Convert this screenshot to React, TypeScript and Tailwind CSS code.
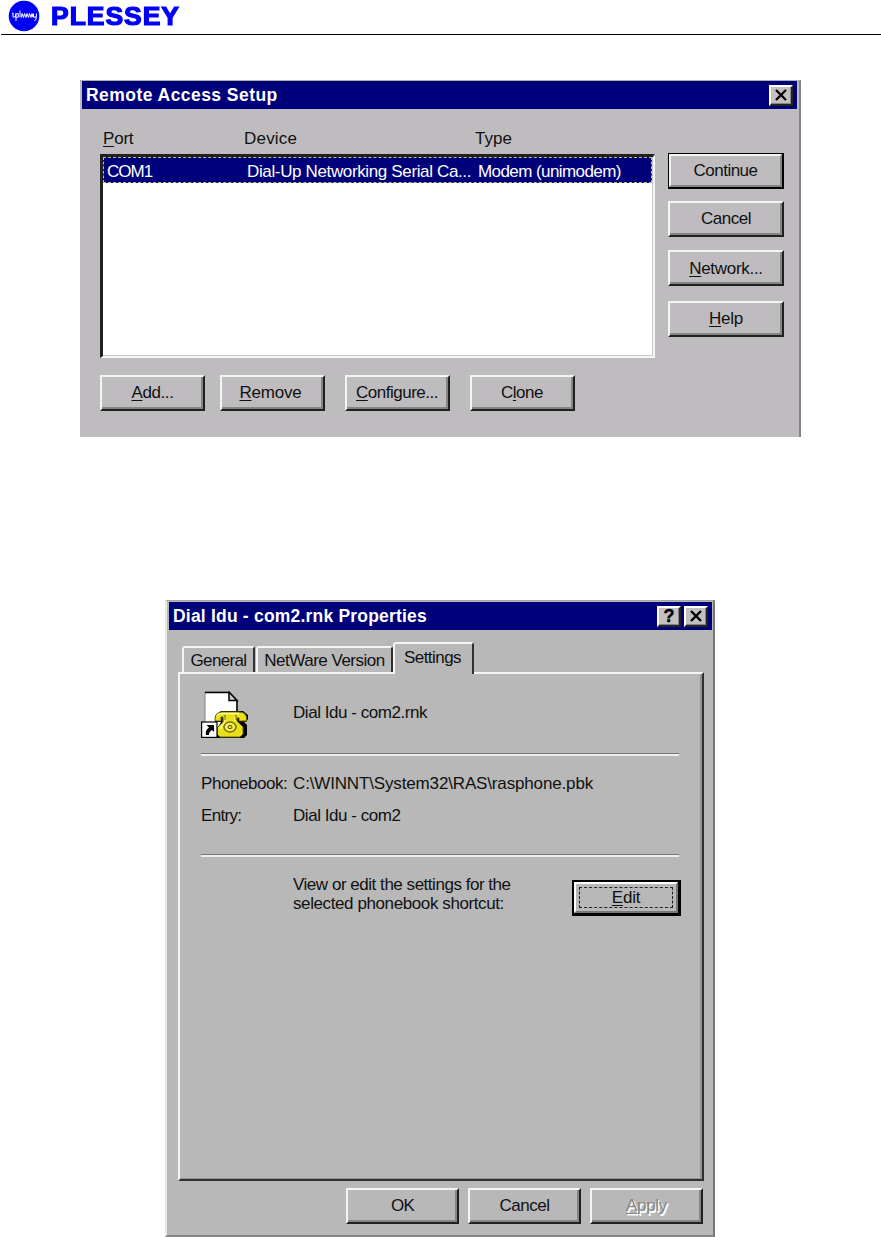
import type { ReactNode } from "react";

const raised =
  "border-2 border-t-[#f4f4f4] border-l-[#f4f4f4] border-r-[#202020] border-b-[#202020] shadow-[inset_-2px_-2px_0_#858585]";

function Button({ children, className = "" }: { children: ReactNode; className?: string }) {
  return (
    <button
      type="button"
      className={`flex shrink-0 items-center justify-center whitespace-nowrap leading-none ${raised} ${className}`}
    >
      {children}
    </button>
  );
}

function Key({ children }: { children: string }) {
  return <span className="underline decoration-1 underline-offset-[2px]">{children}</span>;
}

function CaptionButton({ kind }: { kind: "close" | "help" }) {
  return (
    <button
      type="button"
      className="flex h-[21px] w-[24px] shrink-0 items-center justify-center border-2 border-t-white border-l-white border-r-[#222] border-b-[#222] bg-[#c2c0c0] text-black shadow-[inset_-1px_-1px_0_#858585]"
    >
      {kind === "close" ? (
        <svg width="14" height="12" viewBox="0 0 14 12" fill="none" stroke="currentColor" strokeWidth="2.3">
          <path d="M2 1 L12 11 M12 1 L2 11" />
        </svg>
      ) : (
        <span className="text-[18px] leading-none font-bold [-webkit-text-stroke:0.4px_black]">?</span>
      )}
    </button>
  );
}

function Logo() {
  return (
    <svg className="shrink-0" width="32" height="32" viewBox="0 0 32 32">
      <circle cx="16" cy="16" r="15.3" fill="#0000f8" />
      <path
        d="M4 13.500 L5 13 V17 L7.500 17 V13.500 M8 21 V14 L10.300 13.500 V17 L8 17.500 M12 10.500 V17.500 M13.500 17.500 L14 13.500 L15.500 17.500 L16.500 13.500 L18 17.500 L19 13.500 L20.500 17.500 L21.500 13.500 L23 17.500 L24 13.500 L25 17.500 M25.500 13.500 V17 L28 17 M28.500 13.500 L28 19 L26.500 21"
        fill="none"
        stroke="white"
        strokeWidth="1"
      />
    </svg>
  );
}

function ShortcutIcon() {
  return (
    <svg className="shrink-0" width="48" height="48" viewBox="0 0 48 48">
      <path d="M4 1 H28 L36 9 V46 H4 Z" fill="white" stroke="#858585" />
      <path d="M4 1.500 H28 L36 9.500 V28" fill="none" stroke="black" strokeWidth="1.500" />
      <path d="M28 1 V9.500 H36 Z" fill="#c8c8c8" stroke="black" strokeWidth="1.500" />
      <path d="M16 47 H43 L46 44 V34 L43 31 H45 L47 28 V24 L42 20 H20 L14 25 V31 H20 L16 38 Z" fill="black" />
      <path
        d="M14 27 Q15 21 21 21 H38 Q44 21 45.500 26 V30 H38 V27 H36 V30 L42 36 V43 L39 46 H19 L16 43 V37 L22 31 V26 H20 V30 H14 Z"
        fill="#e9df1b"
        stroke="#686000"
      />
      <path d="M16 25 Q18 22 22 22.500 H38 M24 31 L19 38 M24 26 V30 M34 26 V30" fill="none" stroke="#ffff9a" strokeWidth="1.500" />
      <path d="M24 24 V29 M35 24 V29" stroke="#686000" />
      <ellipse cx="29" cy="36" rx="6" ry="5" fill="#f5ee58" stroke="#777000" strokeWidth="1.500" />
      <ellipse cx="29" cy="36" rx="2" ry="1.700" fill="#e9df1b" stroke="#555000" />
      <rect x="0.600" y="31" width="15.400" height="15.400" fill="white" stroke="black" strokeWidth="1.200" />
      <path d="M5.500 34 H13 V41 L11 39 Q8 40.500 8 44 H5 Q4 39 8 36.500 Z" fill="black" />
    </svg>
  );
}

function RemoteAccessDialog() {
  return (
    <section className="mt-[45px] ml-[80px] h-[357px] w-[721px] border-t border-r-2 border-t-[#b0afb0] border-r-[#858485] bg-[#bebcbf]">
      <header className="ml-[2px] flex h-[28px] w-[715px] items-center justify-between bg-[#00007b] pr-[4px] pl-[4px] text-white">
        <h1 className="pt-[2px] text-[17.5px] leading-none font-bold tracking-[0.45px]">Remote Access Setup</h1>
        <CaptionButton kind="close" />
      </header>
      <div className="flex h-[45px] items-center pt-[13px] pl-[23px] leading-none">
        <span className="w-[141px] tracking-[-0.2px]">
          <Key>P</Key>ort
        </span>
        <span className="w-[231px] tracking-[0.2px]">Device</span>
        <span>Type</span>
      </div>
      <div className="flex">
        <div className="ml-[20px] h-[204px] w-[555px] border-t-[3px] border-r-2 border-b-2 border-l-[3px] border-t-[#202020] border-r-[#f5f5f5] border-b-[#f5f5f5] border-l-[#202020] bg-white shadow-[inset_-1px_-1px_0_#c8c8c8]">
          <div className="flex h-[26px] w-[549px] items-center border border-dashed border-[#c0c078] bg-[#00007b] pt-[2px] pl-[3px] leading-none text-white">
            <span className="w-[140px] tracking-[-1px]">COM1</span>
            <span className="w-[231px] whitespace-nowrap tracking-[-0.36px]">Dial-Up Networking Serial Ca...</span>
            <span className="whitespace-nowrap tracking-[-0.58px]">Modem (unimodem)</span>
          </div>
        </div>
        <div className="-mt-[1px] ml-[13px] flex flex-col">
          <div className="h-[36px] w-[116px] border border-r-2 border-b-2 border-black">
            <Button className="h-full w-full border-r-[#858585] border-b-[#858585] shadow-none tracking-[-0.5px]">
              Continue
            </Button>
          </div>
          <Button className="mt-[12px] h-[36px] w-[116px] pb-[1px] tracking-[-0.5px]">Cancel</Button>
          <Button className="mt-[13px] h-[36px] w-[116px] tracking-[-0.3px]">
            <Key>N</Key>etwork...
          </Button>
          <Button className="mt-[15px] h-[36px] w-[116px] pb-[1px] tracking-[-0.3px]">
            <Key>H</Key>elp
          </Button>
        </div>
      </div>
      <div className="mt-[17px] ml-[20px] flex">
        <Button className="h-[36px] w-[105px] pb-[1px] tracking-[-0.4px]">
          <Key>A</Key>dd...
        </Button>
        <Button className="ml-[15px] h-[36px] w-[105px] pr-[4px] pb-[1px] tracking-[-0.2px]">
          <Key>R</Key>emove
        </Button>
        <Button className="ml-[20px] h-[36px] w-[105px] pr-[1px] pb-[1px] tracking-[-0.5px]">
          <Key>C</Key>onfigure...
        </Button>
        <Button className="ml-[20px] h-[36px] w-[105px] pr-[1px] pb-[1px] tracking-[-0.5px]">
          C<Key>l</Key>one
        </Button>
      </div>
    </section>
  );
}

const tabEdge =
  "flex items-center justify-center rounded-t-[3px] border-t-2 border-l-2 border-r-2 border-t-[#f4f4f4] border-l-[#f4f4f4] border-r-[#303030] leading-none whitespace-nowrap";

function Separator() {
  return <div className="h-[3px] w-[478px] border-t border-b-2 border-t-[#757575] border-b-[#eeeeee]" />;
}

function PropertiesDialog() {
  return (
    <section className="mt-[163px] ml-[165px] h-[637px] w-[550px] border-t border-r-2 border-b-2 border-l-2 border-t-[#a5a5a5] border-r-[#777] border-b-[#858585] border-l-[#e8e8e8] bg-[#b8b8b8]">
      <header className="mt-[1px] ml-[2px] flex h-[28px] w-[543px] items-center bg-[#00007b] pr-[4px] pl-[4px] text-white">
        <h2 className="flex-1 pt-[2px] text-[17.5px] leading-none font-bold tracking-[0.2px]">
          Dial Idu - com2.rnk Properties
        </h2>
        <CaptionButton kind="help" />
        <div className="w-[3px]" />
        <CaptionButton kind="close" />
      </header>
      <div className="mt-[12px] ml-[15px] flex h-[30px] items-end">
        <div className={`${tabEdge} h-[26px] w-[73px] tracking-[-0.65px]`}>General</div>
        <div className={`${tabEdge} ml-[1px] h-[26px] w-[137px] border-r-0 tracking-[-0.5px]`}>NetWare Version</div>
        <div className={`${tabEdge} z-10 -mb-[2px] h-[32px] w-[81px] bg-[#b8b8b8] pr-[2px] pb-[3px] tracking-[-0.55px]`}>
          Settings
        </div>
      </div>
      <div className="ml-[11px] h-[509px] w-[526px] border-2 border-t-[#f4f4f4] border-r-[#303030] border-b-[#303030] border-l-[#f4f4f4] pl-[21px] shadow-[inset_-2px_-1px_0_#929292]">
        <div className="flex h-[79px] pt-[17px]">
          <ShortcutIcon />
          <span className="mt-[13px] ml-[44px] leading-none tracking-[-0.45px]">Dial Idu - com2.rnk</span>
        </div>
        <Separator />
        <div className="mt-[19px] flex leading-none">
          <span className="w-[92px] tracking-[-0.45px]">Phonebook:</span>
          <span className="tracking-[-0.15px]">C:\WINNT\System32\RAS\rasphone.pbk</span>
        </div>
        <div className="mt-[15px] flex leading-none tracking-[-0.45px]">
          <span className="w-[92px] tracking-[-0.7px]">Entry:</span>
          <span>Dial Idu - com2</span>
        </div>
        <div className="mt-[30px]">
          <Separator />
        </div>
        <div className="mt-[18px] ml-[92px] flex">
          <p className="w-[279px] leading-[19px] whitespace-nowrap">
            <span className="block tracking-[-0.47px]">View or edit the settings for the</span>
            <span className="block tracking-[-0.4px]">selected phonebook shortcut:</span>
          </p>
          <div className="mt-[5px] h-[36px] w-[109px] border-2 border-r-[3px] border-b-[3px] border-black">
            <div className="flex h-full border-2 border-t-white border-r-[#777] border-b-[#777] border-l-white p-[3px]">
              <button
                type="button"
                className="flex w-full items-center justify-center border border-dashed border-[#222] leading-none tracking-[-0.2px]"
              >
                <Key>E</Key>dit
              </button>
            </div>
          </div>
        </div>
      </div>
      <div className="mt-[7px] ml-[179px] flex gap-[9px]">
        <Button className="h-[36px] w-[113px] pb-[2px] tracking-[-0.8px]">OK</Button>
        <Button className="h-[36px] w-[113px] pb-[2px] tracking-[-0.5px]">Cancel</Button>
        <Button className="h-[36px] w-[113px] pb-[1px] tracking-[-0.3px] text-[#858585] [text-shadow:1px_1px_0_white,1.5px_1.5px_0_white]">
          <Key>A</Key>pply
        </Button>
      </div>
    </section>
  );
}

export default function App() {
  return (
    <main className="flex h-[1237px] w-[881px] flex-col overflow-hidden bg-white font-['Liberation_Sans',Arial,sans-serif] text-[17px] text-[#111]">
      <header className="ml-[1px] flex h-[35px] shrink-0 items-start border-b border-black pl-[7px]">
        <Logo />
        <span className="mt-[3px] ml-[11px] origin-left scale-x-[1.06] text-[25px] leading-[26px] font-bold tracking-[0.9px] text-[#0000f8] [-webkit-text-stroke:1.2px_#0000f8]">
          PLESSEY
        </span>
      </header>
      <RemoteAccessDialog />
      <PropertiesDialog />
    </main>
  );
}
